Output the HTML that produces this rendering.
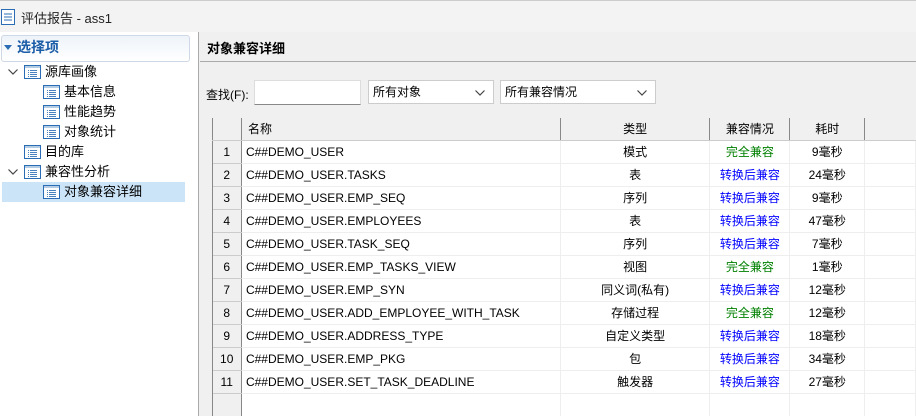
<!DOCTYPE html>
<html><head><meta charset="utf-8"><style>
*{margin:0;padding:0;box-sizing:border-box}
html,body{width:916px;height:416px;overflow:hidden}
body{font-family:"Liberation Sans","Noto Sans CJK SC",sans-serif;font-size:12px;color:#000;background:#f0f0f0;position:relative}
.abs{position:absolute}
.title{left:0;top:0;width:916px;height:32px;background:#f3f3f3;border-top:1px solid #ccc}
.left{left:0;top:32px;width:199px;height:384px;background:#fff;border-right:1px solid #aaa}
.ico{position:absolute;width:17px;height:14px}
.item{position:absolute;font-size:13px;line-height:16px}
.chev{position:absolute;width:10px;height:6px}
table{border-collapse:collapse;position:absolute;left:212px;top:118px;table-layout:fixed;font-size:12px}
td{height:23px;border-right:1px solid #eee;border-bottom:1px solid #eee;background:#fff;white-space:nowrap;overflow:hidden;padding:0 4px}
th{height:22px;background:#f0f0f0;border-right:1px solid #888;border-bottom:1px solid #ccc;font-weight:normal;text-align:center}
td.n{background:#f0f0f0;border-right:1px solid #888;text-align:center;border-bottom:1px solid #ccc}
.c{text-align:center}.g{color:#008000;text-align:center}.b{color:#0000ff;text-align:center}
.sel{border:1px solid #ccc;background:#fff;height:24px;position:absolute;top:80px;font-size:12px;line-height:22px;padding-left:4px}
.sel svg{position:absolute;right:8px;top:9px}
</style></head><body>
<svg width="0" height="0" style="position:absolute"><defs>
<symbol id="ic" viewBox="0 0 17 14"><rect x="0.5" y="0.5" width="16" height="13" fill="#fff" stroke="#2a6db5"/><rect x="1" y="1" width="15" height="2" fill="#2a6db5" opacity=".35"/><g stroke="#2a6db5" stroke-width="1"><path d="M4 5.5h1M6 5.5h7M4 7.5h1M6 7.5h7M4 9.5h1M6 9.5h7M4 11.5h1M6 11.5h7" opacity=".85"/></g></symbol>
<symbol id="cv" viewBox="0 0 10 6"><path d="M0.5 0.5L5 5L9.5 0.5" fill="none" stroke="#444" stroke-width="1.2"/></symbol>
</defs></svg>
<div class="abs title">
  <svg class="abs" style="left:1px;top:8px" width="14" height="16" viewBox="0 0 14 16"><rect x="0.5" y="0.5" width="13" height="15" fill="#fff" stroke="#2a6db5"/><path d="M3 5h8M3 8h8M3 11h8" stroke="#2a6db5"/></svg>
  <div class="abs" style="left:21px;top:7px;font-size:13px;color:#222">评估报告 - ass1</div>
</div>
<div class="abs left">
  <div class="abs" style="left:1px;top:3px;width:189px;height:27px;border:1px solid #cfd8e6;border-radius:3px;background:linear-gradient(#eef3f9,#fff)"></div>
  <svg class="abs" style="left:4px;top:13px" width="8" height="5"><path d="M0 0h8L4 5z" fill="#2a6db5"/></svg>
  <div class="item" style="left:17px;top:7px;color:#1c5da8;font-size:14px;font-weight:bold">选择项</div>
  <svg class="chev" style="left:8px;top:37px"><use href="#cv"/></svg>
  <svg class="ico" style="left:24px;top:33px"><use href="#ic"/></svg><div class="item" style="left:45px;top:32px">源库画像</div>
  <svg class="ico" style="left:43px;top:53px"><use href="#ic"/></svg><div class="item" style="left:64px;top:52px">基本信息</div>
  <svg class="ico" style="left:43px;top:73px"><use href="#ic"/></svg><div class="item" style="left:64px;top:72px">性能趋势</div>
  <svg class="ico" style="left:43px;top:93px"><use href="#ic"/></svg><div class="item" style="left:64px;top:92px">对象统计</div>
  <svg class="ico" style="left:24px;top:113px"><use href="#ic"/></svg><div class="item" style="left:45px;top:112px">目的库</div>
  <svg class="chev" style="left:8px;top:137px"><use href="#cv"/></svg>
  <svg class="ico" style="left:24px;top:133px"><use href="#ic"/></svg><div class="item" style="left:45px;top:132px">兼容性分析</div>
  <div class="abs" style="left:2px;top:150px;width:183px;height:20px;background:#cce4f7"></div>
  <svg class="ico" style="left:43px;top:153px"><use href="#ic"/></svg><div class="item" style="left:64px;top:152px">对象兼容详细</div>
</div>
<div class="abs" style="left:200px;top:32px;width:716px;height:30px;border-bottom:1px solid #aaa;background:#f0f0f0"></div>
<div class="abs" style="left:207px;top:38px;font-size:13px;font-weight:bold">对象兼容详细</div>
<div class="abs" style="left:206px;top:86px;font-size:12px">查找(F):</div>
<div class="abs" style="left:254px;top:80px;width:107px;height:25px;background:#fff;border:1px solid #ddd;border-bottom:1px solid #888"></div>
<div class="sel" style="left:368px;width:126px">所有对象<svg width="10" height="6"><use href="#cv"/></svg></div>
<div class="sel" style="left:500px;width:156px">所有兼容情况<svg width="10" height="6"><use href="#cv"/></svg></div>
<div class="abs" style="left:212px;top:118px;width:704px;height:298px;background:#fff;border-left:1px solid #888;border-top:1px solid #aaa"></div>
<div class="abs" style="left:212px;top:118px;width:29px;height:298px;background:#f0f0f0;border-left:1px solid #888;border-right:1px solid #888"></div>
<table>
<colgroup><col style="width:29px"><col style="width:319px"><col style="width:150px"><col style="width:80px"><col style="width:75px"><col style="width:51px"></colgroup>
<tr><th style="border-left:1px solid #888"></th><th style="text-align:left;padding-left:6px">名称</th><th>类型</th><th>兼容情况</th><th>耗时</th><th style="border-right:none"></th></tr>
<tr><td class="n">1</td><td>C##DEMO_USER</td><td class="c">模式</td><td class="g">完全兼容</td><td class="c">9毫秒</td><td></td></tr>
<tr><td class="n">2</td><td>C##DEMO_USER.TASKS</td><td class="c">表</td><td class="b">转换后兼容</td><td class="c">24毫秒</td><td></td></tr>
<tr><td class="n">3</td><td>C##DEMO_USER.EMP_SEQ</td><td class="c">序列</td><td class="b">转换后兼容</td><td class="c">9毫秒</td><td></td></tr>
<tr><td class="n">4</td><td>C##DEMO_USER.EMPLOYEES</td><td class="c">表</td><td class="b">转换后兼容</td><td class="c">47毫秒</td><td></td></tr>
<tr><td class="n">5</td><td>C##DEMO_USER.TASK_SEQ</td><td class="c">序列</td><td class="b">转换后兼容</td><td class="c">7毫秒</td><td></td></tr>
<tr><td class="n">6</td><td>C##DEMO_USER.EMP_TASKS_VIEW</td><td class="c">视图</td><td class="g">完全兼容</td><td class="c">1毫秒</td><td></td></tr>
<tr><td class="n">7</td><td>C##DEMO_USER.EMP_SYN</td><td class="c">同义词(私有)</td><td class="b">转换后兼容</td><td class="c">12毫秒</td><td></td></tr>
<tr><td class="n">8</td><td>C##DEMO_USER.ADD_EMPLOYEE_WITH_TASK</td><td class="c">存储过程</td><td class="g">完全兼容</td><td class="c">12毫秒</td><td></td></tr>
<tr><td class="n">9</td><td>C##DEMO_USER.ADDRESS_TYPE</td><td class="c">自定义类型</td><td class="b">转换后兼容</td><td class="c">18毫秒</td><td></td></tr>
<tr><td class="n">10</td><td>C##DEMO_USER.EMP_PKG</td><td class="c">包</td><td class="b">转换后兼容</td><td class="c">34毫秒</td><td></td></tr>
<tr><td class="n">11</td><td>C##DEMO_USER.SET_TASK_DEADLINE</td><td class="c">触发器</td><td class="b">转换后兼容</td><td class="c">27毫秒</td><td></td></tr>
<tr><td class="n" style="border-bottom:none;height:22px"></td><td style="border-bottom:none"></td><td style="border-bottom:none"></td><td style="border-bottom:none"></td><td style="border-bottom:none"></td><td style="border-bottom:none"></td></tr>
</table>
</body></html>
